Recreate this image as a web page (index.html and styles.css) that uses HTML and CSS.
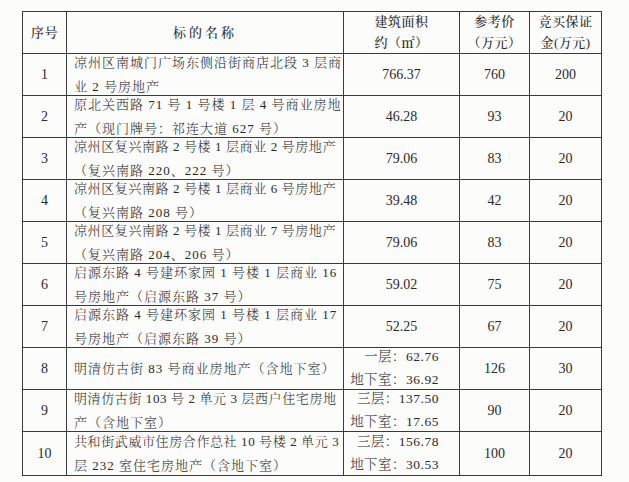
FILE: index.html
```html
<!DOCTYPE html>
<html lang="zh">
<head>
<meta charset="utf-8">
<link rel="stylesheet" href="styles.css">
</head>
<body>
<div class="page">
<table class="lots">
<colgroup>
<col class="c-no"><col class="c-name"><col class="c-area"><col class="c-price"><col class="c-dep">
</colgroup>
<thead>
<tr>
<th>序号</th>
<th class="wide">标的名称</th>
<th><div class="hd"><span>建筑面积</span><span>约（㎡）</span></div></th>
<th><div class="hd"><span>参考价</span><span>（万元）</span></div></th>
<th><div class="hd"><span>竞买保证</span><span>金(万元)</span></div></th>
</tr>
</thead>
<tbody>
<tr><td>1</td><td class="name"><div class="lines"><span>凉州区南城门广场东侧沿街商店北段 3 层商</span><span>业 2 号房地产</span></div></td><td>766.37</td><td>760</td><td>200</td></tr>
<tr><td>2</td><td class="name"><div class="lines"><span>原北关西路 71 号 1 号楼 1 层 4 号商业房地</span><span>产（现门牌号：祁连大道 627 号）</span></div></td><td>46.28</td><td>93</td><td>20</td></tr>
<tr><td>3</td><td class="name"><div class="lines"><span class="tight">凉州区复兴南路 2 号楼 1 层商业 2 号房地产</span><span>（复兴南路 220、222 号）</span></div></td><td>79.06</td><td>83</td><td>20</td></tr>
<tr><td>4</td><td class="name"><div class="lines"><span class="tight">凉州区复兴南路 2 号楼 1 层商业 6 号房地产</span><span>（复兴南路 208 号）</span></div></td><td>39.48</td><td>42</td><td>20</td></tr>
<tr><td>5</td><td class="name"><div class="lines"><span class="tight">凉州区复兴南路 2 号楼 1 层商业 7 号房地产</span><span>（复兴南路 204、206 号）</span></div></td><td>79.06</td><td>83</td><td>20</td></tr>
<tr><td>6</td><td class="name"><div class="lines"><span>启源东路 4 号建环家园 1 号楼 1 层商业 16</span><span>号房地产（启源东路 37 号）</span></div></td><td>59.02</td><td>75</td><td>20</td></tr>
<tr><td>7</td><td class="name"><div class="lines"><span>启源东路 4 号建环家园 1 号楼 1 层商业 17</span><span>号房地产（启源东路 39 号）</span></div></td><td>52.25</td><td>67</td><td>20</td></tr>
<tr><td>8</td><td class="name"><div class="lines"><span>明清仿古街 83 号商业房地产（含地下室）</span></div></td><td class="split"><div class="lines"><span>一层：62.76</span><span>地下室：36.92</span></div></td><td>126</td><td>30</td></tr>
<tr><td>9</td><td class="name"><div class="lines"><span class="tight">明清仿古街 103 号 2 单元 3 层西户住宅房地</span><span>产（含地下室）</span></div></td><td class="split"><div class="lines"><span>三层：137.50</span><span>地下室：17.65</span></div></td><td>90</td><td>20</td></tr>
<tr class="last"><td>10</td><td class="name"><div class="lines"><span class="tight">共和街武威市住房合作总社 10 号楼 2 单元 3</span><span>层 232 室住宅房地产（含地下室）</span></div></td><td class="split"><div class="lines"><span>三层：156.78</span><span>地下室：30.53</span></div></td><td>100</td><td>20</td></tr>
</tbody>
</table>
</div>
</body>
</html>
```
FILE: styles.css
```css
html, body {
  margin: 0;
  padding: 0;
  background: #fcfcfb;
}
.page {
  padding: 11px 0 0 22px;
  width: 629px;
  height: 482px;
  box-sizing: border-box;
  overflow: hidden;
}
.lots {
  border-collapse: collapse;
  table-layout: fixed;
  width: 580px;
  color: #2a2a2a;
  font-family: "Liberation Serif", "Noto Serif CJK SC", "Noto Sans CJK SC", serif;
  font-size: 14px;
  font-weight: 300;
}
.c-no { width: 44px; }
.c-name { width: 277px; }
.c-area { width: 116px; }
.c-price { width: 70px; }
.c-dep { width: 72px; }
.lots th, .lots td {
  border: 1px solid #3a3a3a;
  text-align: center;
  vertical-align: middle;
  padding: 0;
  height: 41px;
  line-height: 16px;
}
.lots tr.last td {
  height: 43px;
}
.lots th {
  font-weight: 500;
  font-size: 13px;
  letter-spacing: 0.5px;
}
.lots th.wide {
  letter-spacing: 3px;
}
.hd {
  display: flex;
  flex-direction: column;
  align-items: center;
  gap: 5px;
}
.lines {
  display: flex;
  flex-direction: column;
  justify-content: center;
  gap: 8px;
  height: 40px;
}
.lots td.name {
  text-align: left;
  padding-left: 7px;
  font-size: 13px;
  letter-spacing: 1px;
  white-space: nowrap;
  overflow: hidden;
}
.name .lines {
  align-items: flex-start;
}
.tight {
  letter-spacing: 0.6px;
}
.lots td.split {
  font-size: 13.5px;
  letter-spacing: 0.5px;
  padding-right: 20px;
}
.split .lines {
  align-items: flex-end;
  gap: 7px;
}
```
